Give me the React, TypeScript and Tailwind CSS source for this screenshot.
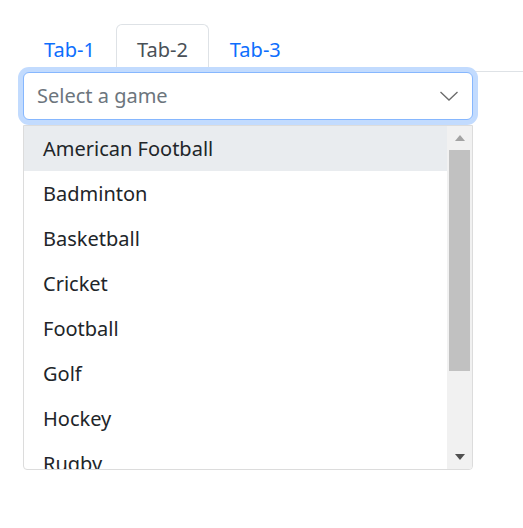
import { useState } from "react";

const games = [
  "American Football",
  "Badminton",
  "Basketball",
  "Cricket",
  "Football",
  "Golf",
  "Hockey",
  "Rugby",
];

const tabs = ["Tab-1", "Tab-2", "Tab-3"];

export default function App() {
  const [active, setActive] = useState(1);
  const [hovered, setHovered] = useState(0);

  return (
    <div
      className="min-h-screen bg-white pl-[23px] pt-[24px] text-[20px] text-[#212529]"
      style={{ fontFamily: '"Segoe UI", "Noto Sans", sans-serif' }}
    >
      <ul className="flex border-b border-[#dee2e6]">
        {tabs.map((tab, i) => (
          <li key={tab} className="-mb-px">
            <button
              onClick={() => setActive(i)}
              className={
                i === active
                  ? "h-[48px] px-[20px] pt-[3px] rounded-t-[6px] border border-[#dee2e6] border-b-white bg-white text-[#495057] leading-[40px]"
                  : "h-[48px] px-[20px] pt-[3px] rounded-t-[6px] border border-transparent text-[#0d6efd] leading-[40px]"
              }
            >
              {tab}
            </button>
          </li>
        ))}
      </ul>

      <div className="relative w-[450px]">
        <div className="flex h-[48px] items-center justify-between rounded-[6px] border border-[#86b7fe] bg-white pl-[13px] pr-[13px] shadow-[0_0_0_5px_#c2dbfe]">
          <span className="text-[#6c757d]">Select a game</span>
          <svg width="20" height="12" viewBox="0 0 20 12" fill="none">
            <polyline
              points="1.5,2 10,10 18.5,2"
              stroke="#6b6b6b"
              strokeWidth="1.3"
            />
          </svg>
        </div>

        <div className="mt-[5px] flex h-[345px] overflow-hidden rounded-b-[4px] border border-[#dcdcdc] bg-white">
          <ul className="flex-1 overflow-hidden">
            {games.map((g, i) => (
              <li
                key={g}
                onMouseEnter={() => setHovered(i)}
                className={
                  i === hovered
                    ? "flex h-[45px] shrink-0 items-center bg-[#e9ecef] pl-[19px]"
                    : "flex h-[45px] shrink-0 items-center pl-[19px]"
                }
              >
                {g}
              </li>
            ))}
          </ul>
          <div className="flex w-[25px] flex-col items-center bg-[#f1f1f1]">
            <div className="flex h-[24px] items-center justify-center">
              <svg width="10" height="6" viewBox="0 0 10 6">
                <polygon points="0,6 10,6 5,0" fill="#a3a3a3" />
              </svg>
            </div>
            <div className="h-[221px] w-[21px] bg-[#c1c1c1]" />
            <div className="flex-1" />
            <div className="flex h-[24px] items-center justify-center">
              <svg width="10" height="6" viewBox="0 0 10 6">
                <polygon points="0,0 10,0 5,6" fill="#505050" />
              </svg>
            </div>
          </div>
        </div>
      </div>
    </div>
  );
}
